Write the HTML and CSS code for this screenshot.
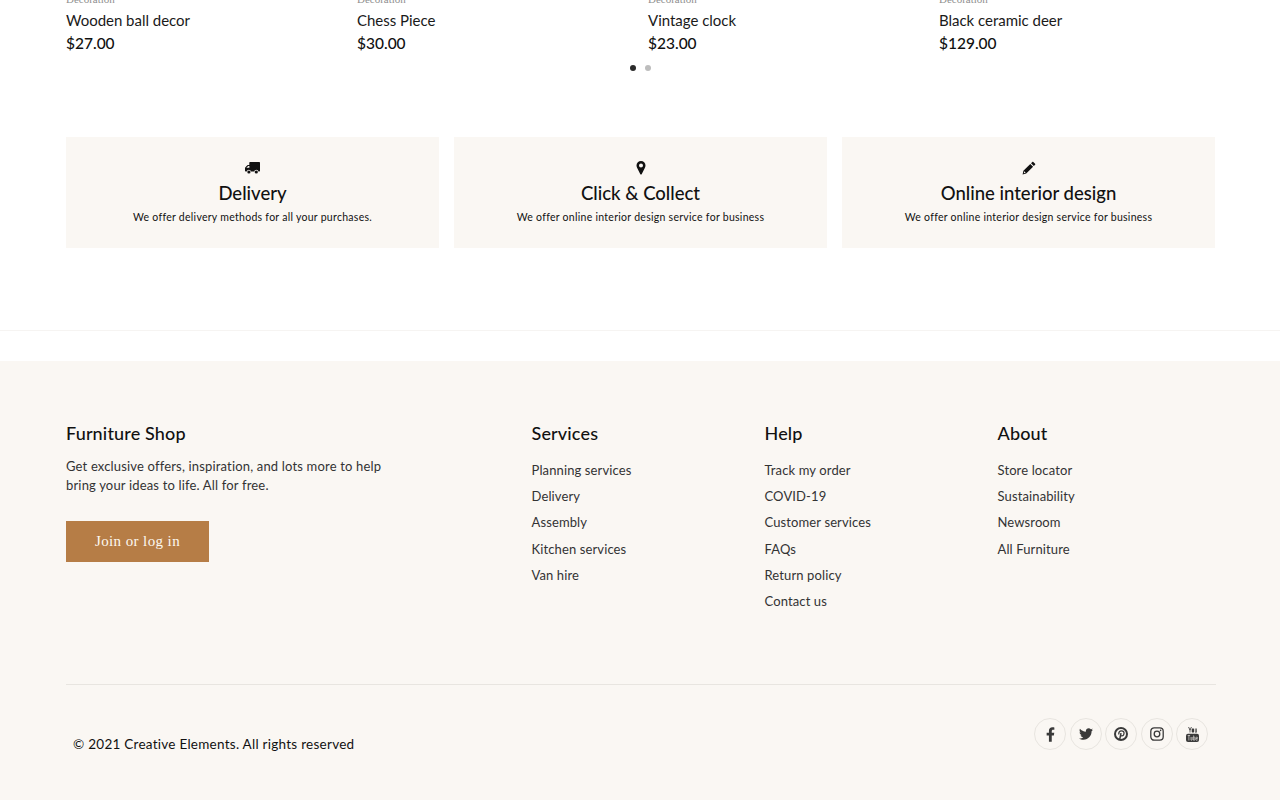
FILE: index.html
```html
<!DOCTYPE html>
<html lang="en">
<head>
<meta charset="utf-8">
<title>Furniture Shop</title>
<link rel="stylesheet" href="styles.css">
</head>
<body>
<main class="page">
  <section class="products">
    <article class="product"><div class="cat">Decoration</div><h3 class="name">Wooden ball decor</h3><div class="price">$27.00</div></article>
    <article class="product"><div class="cat">Decoration</div><h3 class="name">Chess Piece</h3><div class="price">$30.00</div></article>
    <article class="product"><div class="cat">Decoration</div><h3 class="name">Vintage clock</h3><div class="price">$23.00</div></article>
    <article class="product"><div class="cat">Decoration</div><h3 class="name">Black ceramic deer</h3><div class="price">$129.00</div></article>
  </section>
  <div class="dots"><span class="dot on"></span><span class="dot"></span></div>
  <section class="features">
    <div class="feature">
      <svg class="ficon" width="15" height="14" viewBox="0 0 15 14"><path d="M5 1h9.300c.4 0 .7.300.7.700v8.100c0 .4-.3.700-.7.700h-.8a2.200 2.200 0 0 0-4.300 0H6a2.200 2.200 0 0 0-4.300 0H.7c-.4 0-.7-.3-.7-.7V7.200c0-.4.100-.7.400-1L2.300 4.300c.3-.3.600-.4 1-.4h1V1.700c0-.4.300-.7.700-.7zM1.400 6.800h3V5H3.200z" fill-rule="evenodd"/><circle cx="3.900" cy="11" r="1.600"/><circle cx="11.300" cy="11" r="1.600"/></svg>
      <h4 class="ftitle">Delivery</h4>
      <p class="ftext">We offer delivery methods for all your purchases.</p>
    </div>
    <div class="feature">
      <svg class="ficon" width="14" height="14" viewBox="0 0 14 14"><path d="M7 0a4.500 4.500 0 0 0-4.500 4.500c0 1 .3 1.600.7 2.400L6.200 13c.2.400.5.600.8.600s.6-.2.800-.6l3-6.100c.4-.8.700-1.400.7-2.400A4.500 4.500 0 0 0 7 0zm0 6.500a2 2 0 1 1 0-4 2 2 0 0 1 0 4z" fill-rule="evenodd"/></svg>
      <h4 class="ftitle">Click &amp; Collect</h4>
      <p class="ftext">We offer online interior design service for business</p>
    </div>
    <div class="feature">
      <svg class="ficon" width="14" height="14" viewBox="0 0 14 14"><path d="M10.300.9c.3-.3.700-.3 1 0l1.800 1.800c.3.300.3.700 0 1l-1.300 1.300-2.800-2.800zM8.300 2.900l2.800 2.800-6.900 6.900-3.600.9.800-3.700zM2.300 10.300l-.5 1.900 1.900-.5z" fill-rule="evenodd"/></svg>
      <h4 class="ftitle">Online interior design</h4>
      <p class="ftext">We offer online interior design service for business</p>
    </div>
  </section>
  <hr class="rule">
  <footer class="footer">
    <div class="fcols">
      <div class="fcol">
        <h5 class="fhead">Furniture Shop</h5>
        <p class="blurb">Get exclusive offers, inspiration, and lots more to help<br>bring your ideas to life. All for free.</p>
        <a class="btn" href="#">Join or log in</a>
      </div>
      <div class="fcol">
        <h5 class="fhead">Services</h5>
        <ul class="links"><li>Planning services</li><li>Delivery</li><li>Assembly</li><li>Kitchen services</li><li>Van hire</li></ul>
      </div>
      <div class="fcol">
        <h5 class="fhead">Help</h5>
        <ul class="links"><li>Track my order</li><li>COVID-19</li><li>Customer services</li><li>FAQs</li><li>Return policy</li><li>Contact us</li></ul>
      </div>
      <div class="fcol">
        <h5 class="fhead">About</h5>
        <ul class="links"><li>Store locator</li><li>Sustainability</li><li>Newsroom</li><li>All Furniture</li></ul>
      </div>
    </div>
    <div class="fbottom">
      <div class="copy">© 2021 Creative Elements. All rights reserved</div>
      <div class="socials">
        <a class="soc" href="#"><svg width="9" height="15" viewBox="0 0 320 512"><path d="M279.140 288l14.220-92.660h-88.910v-60.130c0-25.350 12.420-50.060 52.240-50.060h40.420V6.260S260.430 0 225.360 0c-73.220 0-121.080 44.380-121.080 124.720v70.620H22.890V288h81.390v224h100.170V288z"/></svg></a>
        <a class="soc" href="#"><svg width="14" height="14" viewBox="0 0 512 512"><path d="M459.370 151.716c.325 4.548.325 9.097.325 13.645 0 138.720-105.583 298.558-298.558 298.558-59.452 0-114.680-17.219-161.137-47.106 8.447.974 16.568 1.299 25.340 1.299 49.055 0 94.213-16.568 130.274-44.832-46.132-.975-84.792-31.188-98.112-72.772 6.498.974 12.995 1.624 19.818 1.624 9.421 0 18.843-1.300 27.614-3.573-48.081-9.747-84.143-51.980-84.143-102.985v-1.299c13.969 7.797 30.214 12.670 47.431 13.319-28.264-18.843-46.781-51.005-46.781-87.391 0-19.492 5.197-37.360 14.294-52.954 51.655 63.675 129.300 105.258 216.365 109.807-1.624-7.797-2.599-15.918-2.599-24.040 0-57.828 46.782-104.934 104.934-104.934 30.213 0 57.502 12.670 76.670 33.137 23.715-4.548 46.456-13.320 66.599-25.340-7.798 24.366-24.366 44.833-46.132 57.827 21.117-2.273 41.584-8.122 60.426-16.243-14.292 20.791-32.161 39.308-52.628 54.253z"/></svg></a>
        <a class="soc" href="#"><svg width="14" height="14" viewBox="0 0 14 14"><circle cx="7" cy="7" r="6" fill="none" stroke="#3a3a3a" stroke-width="2"/><path d="M5.600 13 7 6.200" fill="none" stroke="#3a3a3a" stroke-width="1.500"/><path d="M5 7.500C4.200 5.300 5.700 3.800 7.500 3.800c1.700 0 2.700 1.100 2.500 2.700-.2 1.500-1.100 2.500-2.300 2.400-.6 0-1-.3-1.200-.7" fill="none" stroke="#3a3a3a" stroke-width="1.300"/></svg></a>
        <a class="soc" href="#"><svg width="14" height="14" viewBox="0 0 14 14"><rect x=".8" y=".8" width="12.400" height="12.400" rx="3.400" fill="none" stroke="#3a3a3a" stroke-width="1.300"/><circle cx="7" cy="7" r="2.800" fill="none" stroke="#3a3a3a" stroke-width="1.300"/><circle cx="10.600" cy="3.400" r=".8" fill="#3a3a3a"/></svg></a>
        <a class="soc" href="#"><svg width="13" height="15" viewBox="0 0 13 15"><path d="M3 0l1 2.300L5 0h.8L4.400 3.400v2.200h-.8V3.400L2.200 0zM6.300 1.500h1.200c.4 0 .6.300.6.700v2.600c0 .4-.2.700-.6.700H6.300c-.4 0-.6-.3-.6-.7V2.200c0-.4.200-.7.600-.7zM8.900 1.500h.7v3.500l.6-.2V1.500h.7v4.100h-.7v-.3c-.5.400-1.300.5-1.300-.3z"/><rect y="6.700" width="13" height="8.300" rx="2"/><path d="M1.700 8.500h2.400M2.900 8.500v5M5 10v3c0 .4.700.4 1.200-.2V10M7.600 8.500v5M7.600 10.500c.5-.6 1.300-.6 1.300.2v1.900c0 .8-.8.800-1.300.2M10 11.400h1.500v-.7c0-.8-1.500-.8-1.500 0v2c0 .8 1.500.8 1.500 0" fill="none" stroke="#faf7f3" stroke-width=".6"/></svg></a>
      </div>
    </div>
  </footer>
</main>
</body>
</html>
```

FILE: styles.css
```css
* { box-sizing: border-box; }
html, body { margin: 0; padding: 0; }
body {
  background: #fff;
  color: #111;
  font-family: "Lato", "Open Sans", sans-serif;
  height: 800px;
  overflow: hidden;
}
h3, h4, h5, p, ul { margin: 0; padding: 0; }
ul { list-style: none; }
a { text-decoration: none; color: inherit; }

.products {
  display: grid;
  grid-template-columns: repeat(4, 291px);
  padding: 0 0 0 66px;
  margin-top: -8px;
}
.cat {
  font-family: "Liberation Serif", serif;
  font-size: 11px;
  line-height: 14px;
  color: #8f8f8f;
}
.name {
  font-size: 15px;
  font-weight: 400;
  line-height: 20px;
  margin-top: 4px;
  letter-spacing: -.02px;
  color: #1a1a1a;
}
.price {
  font-size: 15.500px;
  font-weight: 500;
  line-height: 20px;
  margin-top: 3px;
  color: #111;
}
.dots {
  display: flex;
  justify-content: center;
  gap: 9px;
  margin-top: 12px;
  height: 6px;
}
.dot {
  width: 6px;
  height: 6px;
  border-radius: 50%;
  background: #bdbdbd;
}
.dot.on { background: #2b2b2b; }

.features {
  display: grid;
  grid-template-columns: repeat(3, 373px);
  gap: 15px;
  margin: 66px 0 0 66px;
}
.feature {
  height: 111px;
  background: #faf7f3;
  display: flex;
  flex-direction: column;
  align-items: center;
  padding-top: 24px;
}
.ficon { display: block; fill: #111; height: 14px; }
.ftitle {
  font-size: 18.500px;
  font-weight: 500;
  line-height: 24px;
  margin-top: 6px;
  letter-spacing: 0;
  color: #111;
}
.ftext {
  font-size: 10.500px;
  line-height: 14px;
  margin-top: 5px;
  letter-spacing: .28px;
  color: #111;
}
.rule {
  border: 0;
  border-top: 1px solid #f6f4f2;
  margin: 82px 0 0;
  height: 0;
}
.footer {
  margin-top: 30px;
  background: #faf7f3;
  height: 439px;
  padding: 60px 64px 0 66px;
}
.fcols {
  display: grid;
  grid-template-columns: 465.500px 233px 233px 1fr;
  height: 264px;
  border-bottom: 1px solid #e8e5e0;
}
.fhead {
  font-size: 18px;
  font-weight: 500;
  line-height: 24px;
  letter-spacing: .15px;
  color: #111;
}
.blurb {
  font-size: 13px;
  line-height: 18.500px;
  margin-top: 12px;
  letter-spacing: .17px;
  color: #333;
}
.btn {
  display: flex;
  align-items: center;
  justify-content: center;
  width: 143px;
  height: 41px;
  margin-top: 27px;
  background: #b67d46;
  color: #fdf8f0;
  font-family: "Liberation Serif", serif;
  font-size: 15px;
  letter-spacing: .4px;
}
.links { margin-top: 12px; }
.links li {
  font-size: 13px;
  line-height: 26.200px;
  letter-spacing: .12px;
  color: #333;
}
.fbottom {
  display: flex;
  justify-content: space-between;
  padding: 33px 8px 0 7px;
}
.copy {
  font-size: 13.500px;
  line-height: 20px;
  margin-top: 16px;
  letter-spacing: .26px;
  color: #111;
}
.socials { display: flex; gap: 3.500px; }
.soc {
  width: 32px;
  height: 32px;
  border: 1px solid #e8e5e0;
  border-radius: 50%;
  display: flex;
  align-items: center;
  justify-content: center;
}
.soc svg { fill: #3a3a3a; display: block; }
```
